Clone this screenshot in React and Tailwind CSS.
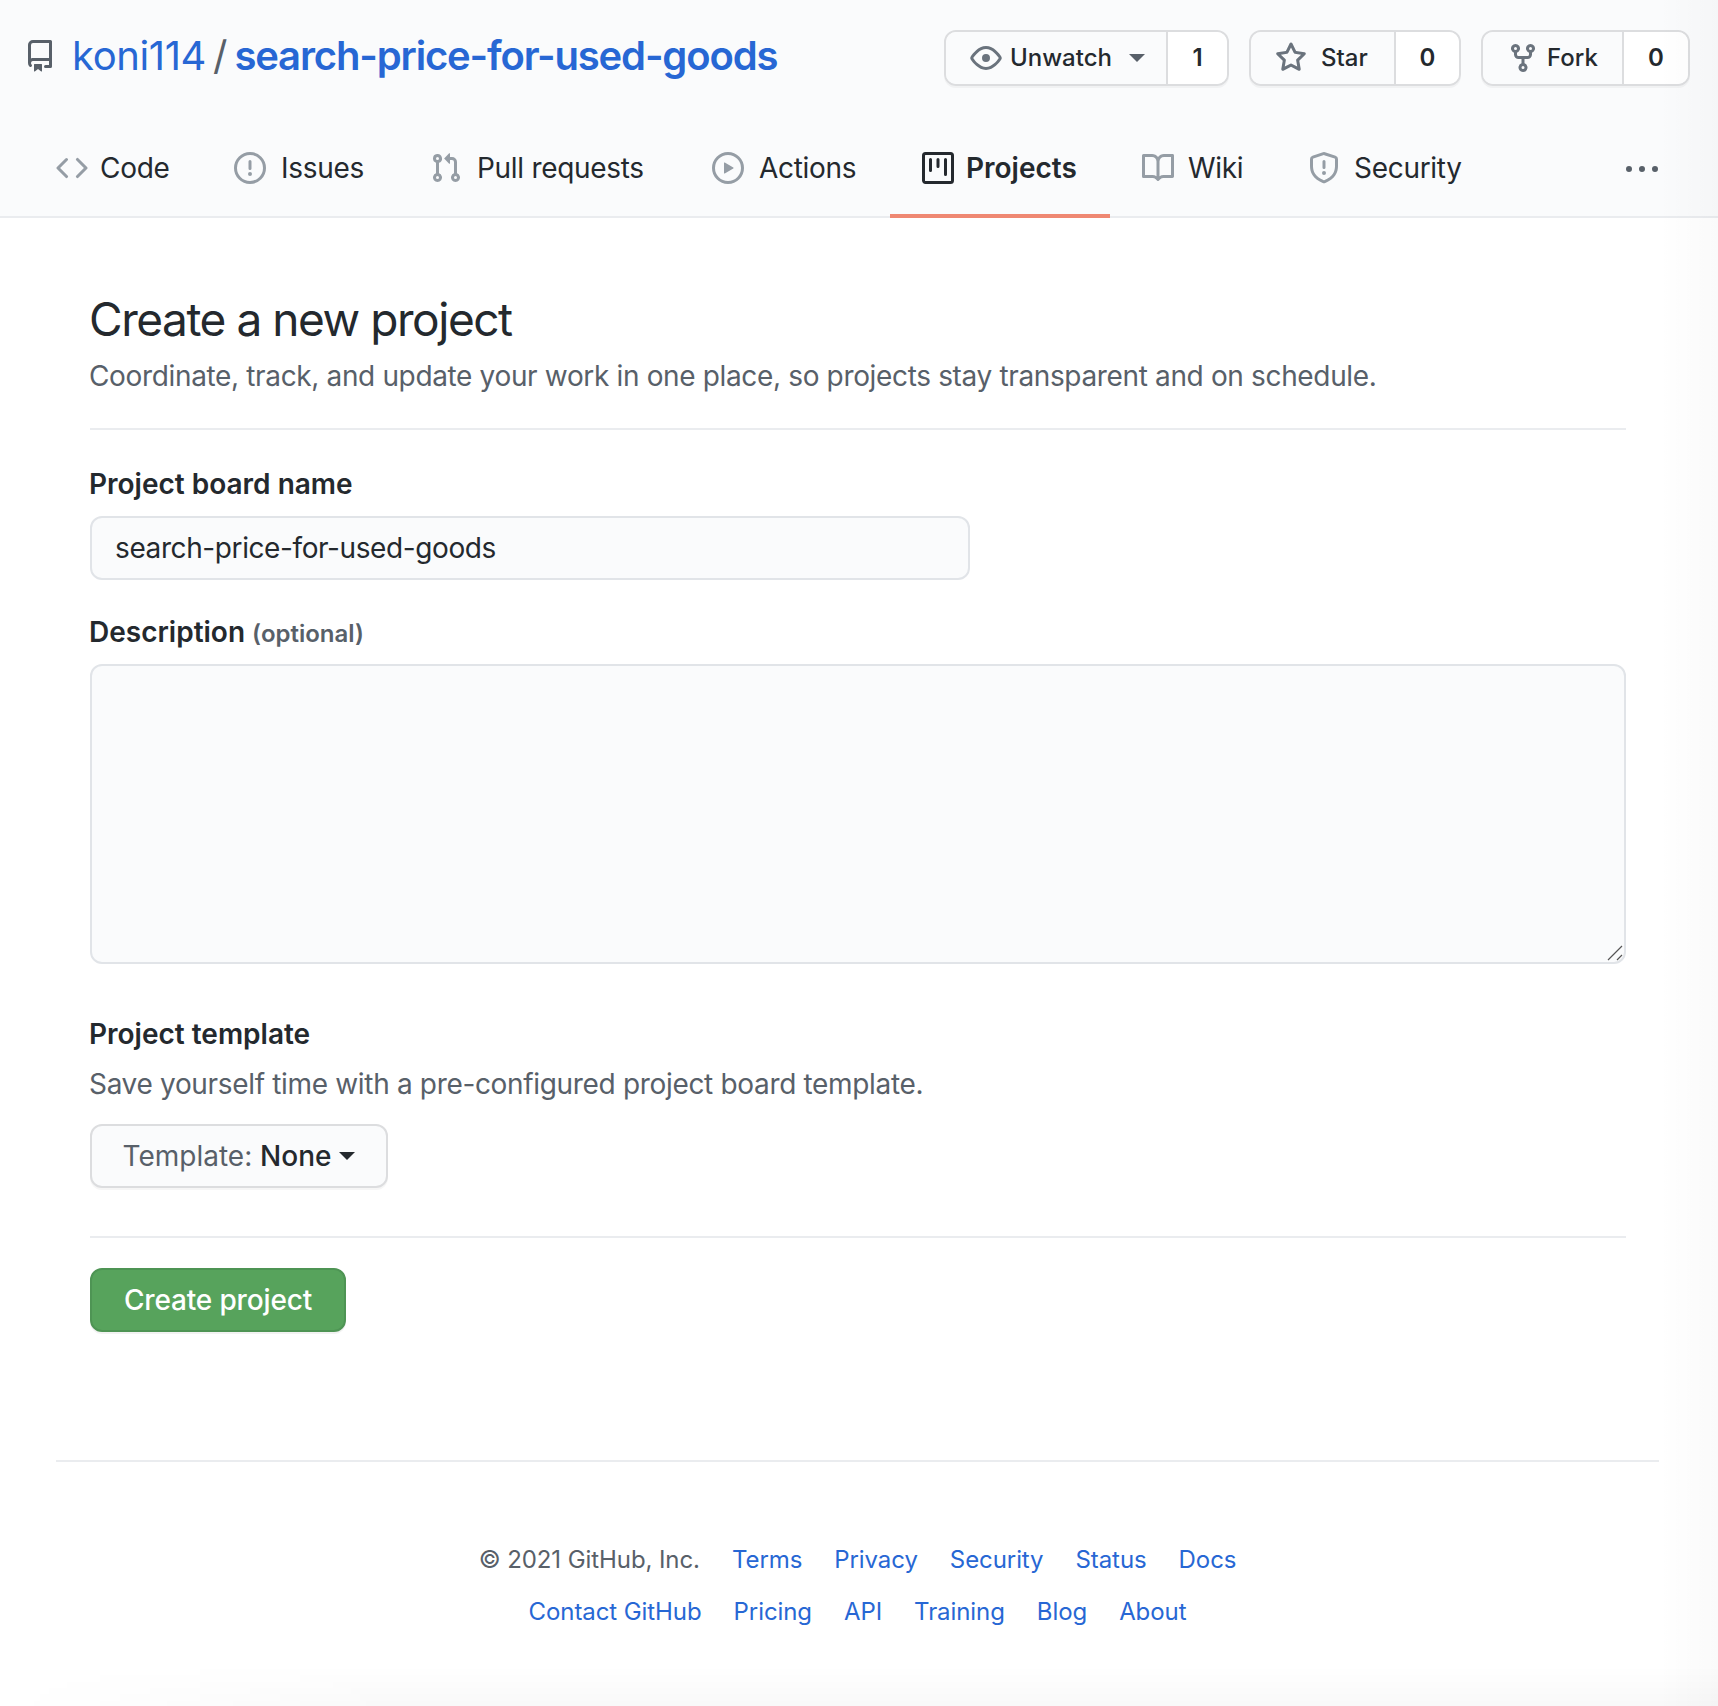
import React from 'react'

const icons = {
  repo: 'M2 2.5A2.5 2.5 0 014.5 0h8.75a.75.75 0 01.75.75v12.5a.75.75 0 01-.75.75h-2.5a.75.75 0 110-1.5h1.75v-2h-8a1 1 0 00-.714 1.7.75.75 0 01-1.072 1.05A2.495 2.495 0 012 11.5v-9zm10.5-1V9h-8c-.356 0-.694.074-1 .208V2.5a1 1 0 011-1h8zM5 12.25v3.25a.25.25 0 00.4.2l1.45-1.087a.25.25 0 01.3 0L8.6 15.7a.25.25 0 00.4-.2v-3.25a.25.25 0 00-.25-.25h-3.5a.25.25 0 00-.25.25z',
  eye: 'M1.679 7.932c.412-.621 1.242-1.75 2.366-2.717C5.175 4.242 6.527 3.5 8 3.5c1.473 0 2.824.742 3.955 1.715 1.124.967 1.954 2.096 2.366 2.717a.119.119 0 010 .136c-.412.621-1.242 1.75-2.366 2.717C10.825 11.758 9.473 12.5 8 12.5c-1.473 0-2.824-.742-3.955-1.715C2.92 9.818 2.09 8.69 1.679 8.068a.119.119 0 010-.136zM8 2c-1.981 0-3.67.992-4.933 2.078C1.797 5.169.88 6.423.43 7.1a1.619 1.619 0 000 1.798c.45.678 1.367 1.932 2.637 3.024C4.329 13.008 6.019 14 8 14c1.981 0 3.67-.992 4.933-2.078 1.27-1.091 2.187-2.345 2.637-3.023a1.619 1.619 0 000-1.798c-.45-.678-1.367-1.932-2.637-3.023C11.671 2.992 9.981 2 8 2zm0 8a2 2 0 100-4 2 2 0 000 4z',
  star: 'M8 .25a.75.75 0 01.673.418l1.882 3.815 4.21.612a.75.75 0 01.416 1.279l-3.046 2.97.719 4.192a.75.75 0 01-1.088.791L8 12.347l-3.766 1.98a.75.75 0 01-1.088-.79l.72-4.194L.818 6.374a.75.75 0 01.416-1.28l4.21-.611L7.327.668A.75.75 0 018 .25zm0 2.445L6.615 5.5a.75.75 0 01-.564.41l-3.097.45 2.24 2.184a.75.75 0 01.216.664l-.528 3.084 2.769-1.456a.75.75 0 01.698 0l2.77 1.456-.53-3.084a.75.75 0 01.216-.664l2.24-2.183-3.096-.45a.75.75 0 01-.564-.41L8 2.694v.001z',
  fork: 'M5 3.25a.75.75 0 11-1.5 0 .75.75 0 011.5 0zm0 2.122a2.25 2.25 0 10-1.5 0v.878A2.25 2.25 0 005.75 8.5h1.5v2.128a2.251 2.251 0 101.5 0V8.5h1.5a2.25 2.25 0 002.25-2.25v-.878a2.25 2.25 0 10-1.5 0v.878a.75.75 0 01-.75.75h-4.5A.75.75 0 015 6.25v-.878zm3.75 7.378a.75.75 0 11-1.5 0 .75.75 0 011.5 0zm3-8.75a.75.75 0 100-1.5.75.75 0 000 1.5z',
  code: 'M4.72 3.22a.75.75 0 011.06 1.06L2.06 8l3.72 3.72a.75.75 0 11-1.06 1.06L.47 8.53a.75.75 0 010-1.06l4.25-4.25zm6.56 0a.75.75 0 10-1.06 1.06L13.94 8l-3.72 3.72a.75.75 0 101.06 1.06l4.25-4.25a.75.75 0 000-1.06l-4.25-4.25z',
  issue: 'M8 1.5a6.5 6.5 0 100 13 6.5 6.5 0 000-13zM0 8a8 8 0 1116 0A8 8 0 010 8zm9 3a1 1 0 11-2 0 1 1 0 012 0zm-.25-6.25a.75.75 0 00-1.5 0v3.5a.75.75 0 001.5 0v-3.5z',
  pull: 'M7.177 3.073L9.573.677A.25.25 0 0110 .854v4.792a.25.25 0 01-.427.177L7.177 3.427a.25.25 0 010-.354zM3.75 2.5a.75.75 0 100 1.5.75.75 0 000-1.5zm-2.25.75a2.25 2.25 0 113 2.122v5.256a2.251 2.251 0 11-1.5 0V5.372A2.25 2.25 0 011.5 3.25zM11 2.5h-1V4h1a1 1 0 011 1v5.628a2.251 2.251 0 101.5 0V5A2.5 2.5 0 0011 2.5zm1 10.25a.75.75 0 111.5 0 .75.75 0 01-1.5 0zM3.75 12a.75.75 0 100 1.5.75.75 0 000-1.5z',
  play: 'M1.5 8a6.5 6.5 0 1113 0 6.5 6.5 0 01-13 0zM8 0a8 8 0 100 16A8 8 0 008 0zM6.379 5.227A.25.25 0 006 5.442v5.117a.25.25 0 00.379.214l4.264-2.559a.25.25 0 000-.428L6.379 5.227z',
  project: 'M1.75 0A1.75 1.75 0 000 1.75v12.5C0 15.216.784 16 1.75 16h12.5A1.75 1.75 0 0016 14.25V1.75A1.75 1.75 0 0014.25 0H1.75zM1.5 1.75a.25.25 0 01.25-.25h12.5a.25.25 0 01.25.25v12.5a.25.25 0 01-.25.25H1.75a.25.25 0 01-.25-.25V1.75zM11.75 3a.75.75 0 00-.75.75v7.5a.75.75 0 001.5 0v-7.5a.75.75 0 00-.75-.75zm-8.25.75a.75.75 0 011.5 0v5.5a.75.75 0 01-1.5 0v-5.5zM8 3a.75.75 0 00-.75.75v3.5a.75.75 0 001.5 0v-3.5A.75.75 0 008 3z',
  book: 'M0 1.75A.75.75 0 01.75 1h4.253c1.227 0 2.317.59 3 1.501A3.744 3.744 0 0111.006 1h4.245a.75.75 0 01.75.75v10.5a.75.75 0 01-.75.75h-4.507a2.25 2.25 0 00-1.591.659l-.622.621a.75.75 0 01-1.06 0l-.622-.621A2.25 2.25 0 005.258 13H.75a.75.75 0 01-.75-.75V1.75zm8.755 3a2.25 2.25 0 012.25-2.25H14.5v9h-3.757c-.71 0-1.4.201-1.992.572l.004-7.322zm-1.504 7.324l.004-5.073-.002-2.253A2.25 2.25 0 005.003 2.5H1.5v9h3.757a3.75 3.75 0 011.994.574z',
  shield: 'M7.467.133a1.75 1.75 0 011.066 0l5.25 1.68A1.75 1.75 0 0115 3.48V7c0 1.566-.32 3.182-1.303 4.682-.983 1.498-2.585 2.813-5.032 3.855a1.7 1.7 0 01-1.33 0c-2.447-1.042-4.049-2.357-5.032-3.855C1.32 10.182 1 8.566 1 7V3.48a1.75 1.75 0 011.217-1.667l5.25-1.68zm.61 1.429a.25.25 0 00-.153 0l-5.25 1.68a.25.25 0 00-.174.238V7c0 1.358.275 2.666 1.057 3.86.784 1.194 2.121 2.34 4.366 3.297a.2.2 0 00.154 0c2.245-.956 3.582-2.104 4.366-3.298C13.225 9.666 13.5 8.36 13.5 7V3.48a.25.25 0 00-.174-.237l-5.25-1.68zM9 10.5a1 1 0 11-2 0 1 1 0 012 0zm-.25-5.75a.75.75 0 10-1.5 0v3a.75.75 0 001.5 0v-3z',
  kebab: 'M8 9a1.5 1.5 0 100-3 1.5 1.5 0 000 3zM1.5 9a1.5 1.5 0 100-3 1.5 1.5 0 000 3zm13 0a1.5 1.5 0 100-3 1.5 1.5 0 000 3z',
}

function Octicon({ name, className }) {
  return (
    <svg viewBox="0 0 16 16" fill="currentColor" className={className}>
      <path fillRule="evenodd" d={icons[name]} />
    </svg>
  )
}

function Caret({ className }) {
  return <span className={`inline-block w-0 h-0 border-x-[8px] border-x-transparent border-t-[8px] ${className}`} />
}

function RepoAction({ icon, label, count, caret, labelClass, countClass }) {
  return (
    <div className="flex h-14 rounded-xl border-2 border-[#dcdddf] shadow-[0_2px_0_rgba(27,31,35,0.04)] overflow-hidden text-[24px] font-medium text-[#24292e]">
      <div className={`flex items-center bg-[#fafbfc] pl-6 ${labelClass}`}>
        <Octicon name={icon} className="w-8 h-8 text-[#6a737d] shrink-0" />
        <span>{label}</span>
        {caret && <Caret className="ml-[9px] border-t-[#586069]" />}
      </div>
      <div className={`flex items-center justify-center bg-white border-l-2 border-[#dcdddf] font-semibold ${countClass}`}>
        {count}
      </div>
    </div>
  )
}

function Tab({ icon, label, active, width }) {
  return (
    <a
      className={`flex items-center pl-8 h-[98px] text-[28px] ${width} ${
        active
          ? 'border-b-4 border-[#ef8872] font-semibold text-[#24292e] pt-[2px]'
          : 'pb-[2px] text-[#24292e] tracking-[-0.3px]'
      }`}
    >
      <Octicon name={icon} className={`w-8 h-8 ${active ? 'text-[#24292e]' : 'text-[#959da5]'}`} />
      {label}
    </a>
  )
}

const tabs = [
  { icon: 'code', label: 'Code', width: 'w-[178px] gap-3' },
  { icon: 'issue', label: 'Issues', width: 'w-[196px] gap-[15px]' },
  { icon: 'pull', label: 'Pull requests', width: 'w-[282px] gap-[15px]' },
  { icon: 'play', label: 'Actions', width: 'w-[210px] gap-[15px]' },
  { icon: 'project', label: 'Projects', active: true, width: 'w-[220px] gap-3' },
  { icon: 'book', label: 'Wiki', width: 'w-[166px] gap-[14px]' },
  { icon: 'shield', label: 'Security', width: 'w-[190px] gap-[14px]' },
]

const footerRows = [
  ['Terms', 'Privacy', 'Security', 'Status', 'Docs'],
  ['Contact GitHub', 'Pricing', 'API', 'Training', 'Blog', 'About'],
]

export default function App() {
  return (
    <div className="relative w-[1718px] h-[1706px] overflow-hidden bg-white font-['Inter','Liberation_Sans',sans-serif] text-[#24292e]">
      <header className="h-[218px] bg-[#fafbfc] border-b-2 border-[#eaecef]">
        <div className="h-[120px] pt-[30px] pl-7 pr-7 flex items-start justify-between">
          <div className="flex items-center h-[52px] text-[40px]">
            <Octicon name="repo" className="w-8 h-8 text-[#586069] mr-[14px] -ml-1" />
            <a className="ml-[2px] text-[#2767d4] tracking-[-0.4px]">koni114</a>
            <span className="mx-[7px] text-[#586069]">/</span>
            <a className="font-semibold text-[#2767d4] tracking-[-1.15px]">search-price-for-used-goods</a>
          </div>
          <div className="flex gap-5">
            <RepoAction icon="eye" label="Unwatch" count="1" caret labelClass="w-[220px] gap-[8px]" countClass="w-[61px]" />
            <RepoAction icon="star" label="Star" count="0" labelClass="w-[143px] gap-[14px]" countClass="w-[65px]" />
            <RepoAction icon="fork" label="Fork" count="0" labelClass="w-[139px] gap-[8px]" countClass="w-[66px]" />
          </div>
        </div>
        <nav className="flex items-start justify-between pl-6 pr-[60px]">
          <div className="flex">
            {tabs.map((t) => (
              <Tab key={t.label} {...t} />
            ))}
          </div>
          <div className="h-[98px] pt-[2px] flex items-center">
            <Octicon name="kebab" className="w-8 h-8 text-[#586069]" />
          </div>
        </nav>
      </header>

      <main className="pl-[90px] pr-[92px] pt-[67px]">
        <h1 className="-ml-[1px] text-[46px] leading-[68px] tracking-[-1.45px] font-normal">Create a new project</h1>
        <p className="-ml-[1px] text-[28px] leading-[42px] mt-[2px] tracking-[-0.35px] text-[#586069]">
          Coordinate, track, and update your work in one place, so projects stay transparent and on schedule.
        </p>
        <div className="h-[2px] bg-[#eaecef] mt-[31px]" />

        <label className="block -ml-[1px] text-[28px] leading-10 font-semibold mt-[34px]">Project board name</label>
        <div className="mt-3 w-[880px] h-16 flex items-center pl-[23px] text-[28px] tracking-[-0.4px] bg-[#fafbfc] border-2 border-[#e1e4e8] rounded-xl">
          search-price-for-used-goods
        </div>

        <label className="block -ml-[1px] text-[28px] leading-10 font-semibold mt-8">
          Description <span className="text-[24px] text-[#586069]">(optional)</span>
        </label>
        <div className="relative mt-[10px] h-[300px] bg-[#fafbfc] border-2 border-[#e1e4e8] rounded-xl">
          <svg viewBox="0 0 16 16" className="absolute right-[1px] bottom-[1px] w-4 h-4 text-[#555]" stroke="currentColor" strokeWidth="1.2">
            <path d="M1 15 15 1M10 15l5-5" />
          </svg>
        </div>

        <div className="-ml-[1px] text-[28px] leading-10 font-semibold mt-[50px]">Project template</div>
        <p className="-ml-[1px] text-[28px] leading-10 mt-[10px] tracking-[-0.33px] text-[#586069]">
          Save yourself time with a pre-configured project board template.
        </p>
        <div className="mt-5 w-[298px] h-16 flex items-center justify-center gap-2 text-[28px] text-[#586069] bg-[#fafbfc] border-2 border-[#dcdddf] rounded-xl shadow-[0_2px_0_rgba(27,31,35,0.04)]">
          <span>
            Template: <span className="font-medium text-[#24292e]">None</span>
          </span>
          <Caret className="border-t-[#24292e]" />
        </div>
        <div className="h-[2px] bg-[#eaecef] mt-12" />

        <div className="mt-[30px] w-[256px] h-16 flex items-center justify-center text-[28px] font-medium tracking-[-0.15px] text-white bg-[#57a35c] border-2 border-[#4e9454] rounded-xl shadow-[0_2px_0_rgba(27,31,35,0.06)]">
          Create project
        </div>
      </main>

      <footer className="ml-14 mr-[59px] mt-[128px] border-t-2 border-[#eaecef] pt-[72px] text-[24px] tracking-[-0.08px]">
        {footerRows.map((row, i) => (
          <div key={i} className="flex justify-center gap-8 h-[52px] items-start leading-[52px]">
            {i === 0 && <span className="text-[#586069]">© 2021 GitHub, Inc.</span>}
            {row.map((l) => (
              <a key={l} className="text-[#2767d4]">
                {l}
              </a>
            ))}
          </div>
        ))}
      </footer>

      {/* faint window shadow along the right and bottom edges */}
      <div className="absolute top-0 bottom-0 right-0 w-[60px] bg-gradient-to-r from-transparent to-black/[0.02] pointer-events-none" />
      <div className="absolute bottom-0 left-0 right-0 h-[40px] bg-gradient-to-b from-transparent to-black/[0.025] [mask-image:linear-gradient(to_right,transparent,black_400px)] pointer-events-none" />
    </div>
  )
}
